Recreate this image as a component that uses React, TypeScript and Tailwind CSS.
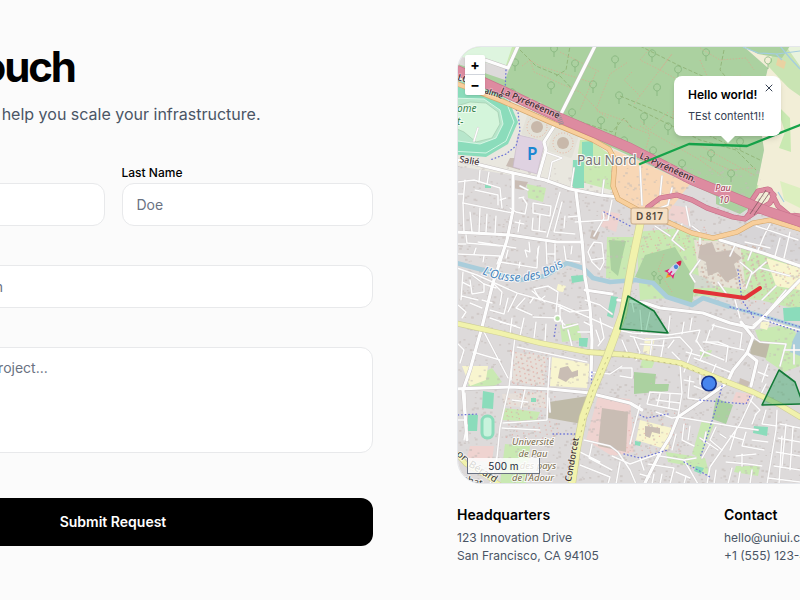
import type { ReactNode } from "react";
import { X } from "lucide-react";

// Map data ---------------------------------------------
const FOREST = [
	"M518 46H743L768 68 758 108 764 150 756 190 746 210 458 76V64L505 80Z",
	"M609 240 626 241 622 258 618 276 611 270Z",
	"M716 398 733 405 726 424 712 419Z",
	"M634 372 656 374 655 384 669 384 668 391 634 394Z",
	"M743 46H790L782 58 758 54Z",
	"M716 184 744 200 752 206 740 214 716 204Z",
];
const GRASS = [
	"M607 237H640L634 282 606 278Z",
	"M636 232 680 228 716 240 780 258 800 268V310L760 300 700 296 640 300Z",
	"M527 184 546 188 543 202 528 198Z",
	"M590 140 612 156 611 190 574 180 580 140Z",
	"M503 408 540 412 536 422 502 420Z",
	"M505 444 530 446 526 484 500 484Z",
	"M666 452 705 458 710 476 690 466 668 462Z",
	"M702 420 715 422 700 458 692 454Z",
	"M560 325 578 323 582 340 562 342Z",
	"M736 466 760 466 758 476 734 472Z",
	"M470 380 492 368 502 382 490 388 468 386Z",
	"M755 330 790 324 800 340V366L784 372 766 360Z",
	"M745 180 760 186 750 204 738 198Z",
	"M458 46H518L508 66 485 60 458 56Z",
	"M700 352 712 350 710 356 700 358Z",
	"M642 360 656 358 652 368 640 368Z",
];
const PITCH = [
	"M573 160 584 160 584 186 572 186Z",
	"M582 142 593 141 593 158 582 158Z",
	"M483 391 494 393 493 409 482 408Z",
	"M468 414 478 415 477 431 467 431Z",
	"M611 296 618 297 613 318 607 316Z",
	"M571 276 583 275 584 281 572 283Z",
	"M783 308 800 307 800 321 784 321Z",
	"M754 426 768 427 767 436 753 433Z",
	"M573 174 584 174 584 188 573 188Z",
	"M531 398 536 398 536 402 531 402Z",
	"M696 466 704 468 701 474 694 471Z",
	"M579 338 588 338 587 347 579 346Z",
	"M635 441 641 442 640 446 635 445Z",
	"M485 184 491 184 491 188 485 188Z",
];
const PINK = [
	"M598 396 630 399 634 452 612 456 586 440Z",
	"M672 205 690 208 688 226 668 218Z",
	"M470 446 494 446 492 462 466 460Z",
	"M602 210 620 214 616 232 600 226Z",
	"M736 392 752 394 748 404 732 402Z",
];
const SCHOOL = [
	"M552 357 590 364 587 388 550 386Z",
	"M640 420 672 428 668 450 636 440Z",
	"M462 366 488 366 486 380 470 386Z",
	"M558 284 566 286 563 292 556 291Z",
	"M766 258 800 268V290L776 286Z",
	"M761 322 770 322 767 330 760 328Z",
	"M645 338 655 338 651 355 643 352Z",
];
const BUILDINGS = [
	"M602 408 628 412 626 452 598 446Z",
	"M700 246 712 242 716 252 732 250 742 258 734 264 738 276 726 282 718 272 708 276 706 262 698 258Z",
	"M560 368 568 366 572 372 578 370 578 376 570 378 566 382 558 378Z",
	"M645 426 660 428 660 434 652 432 650 438 645 436Z",
	"M510 158 520 158 520 170 506 166Z",
	"M514 180 528 182 524 190 512 188Z",
	"M592 230 600 232 597 240 590 238Z",
	"M740 378 750 382 746 392 738 388Z",
];
const RINGS = [[537, 127], [563, 143]];

// trees standing in the wood
const TREES = [
	[575, 61], [551, 83], [593, 82], [615, 57], [619, 93], [572, 110], [601, 118], [515, 60], [554, 46],
	[624, 138], [652, 51], [678, 67], [706, 50], [657, 85], [644, 114], [768, 58], [653, 148], [711, 151],
	[740, 139], [731, 171], [682, 161], [668, 124], [512, 90],
];

const STREETS = [
	"M457 160 480 165 513 173 545 180 570 189 600 195 618 197",
	"M457 232 510 235 557 242 582 242",
	"M513 173V210L507 240 493 283 482 327 470 370 463 390 467 440",
	"M576 192 582 240 585 277 590 307 592 340 591 377",
	"M457 389 510 387 550 389 590 393",
	"M645 483 660 453 670 437 678 417 700 402 727 383 733 370 747 353 753 337 741 322",
	"M747 353 757 361 751 386",
	"M618 300 645 303 660 308 703 313 730 323 753 328 800 280",
	"M720 240 763 253 800 266 860 290",
	"M597 395 630 403 642 410",
	"M595 46 558 120 544 142 546 150 538 178",
	"M518 46 508 68 485 60",
	"M585 290 612 294",
];

const LANES = [
	"M463 203 513 213M457 254 500 256 497 264M457 268 477 275 517 293 560 305 590 318 617 330",
	"M500 262 537 268 538 248M560 192 547 237M575 222 608 220 612 200M594 236 604 218 603 212",
	"M465 180 463 203 464 232M457 182 474 180 500 188 502 208M475 190 498 195 498 205M470 212 472 232M496 216 495 234",
	"M466 235 467 243 500 246M478 242 516 248M484 256 483 262M500 200 506 198M523 198 527 204 525 214 516 212 510 208M519 198 524 197",
	"M533 203 551 206 550 216 533 213ZM533 218 532 230 546 232M540 215 539 231M562 202 554 232 575 234M565 216 564 228M568 217 578 216",
	"M529 242 530 252 525 250 527 257M539 246 537 258M546 242 547 264M555 244 555 262M564 246 566 260 580 262M572 246 571 254M548 254 555 254",
	"M590 248 594 242 602 243 604 262 600 270 592 262 588 252ZM591 260 604 258M472 275 484 284 484 292 472 294 470 280M493 283 502 292 500 305",
	"M525 298 516 308 532 315M508 298 504 314 490 310M517 294 508 312M534 297 530 303M482 300 492 303M545 296 540 300 534 289 548 286 558 292 556 312",
	"M558 306 570 312 590 310M532 291 545 302M533 317 558 318 565 325M560 305V320M470 303 482 308M458 305 466 312 462 318M585 300 600 305 612 314",
	"M483 330 508 378M457 343 464 350 460 363M473 352 500 360M515 337 509 387 500 427 497 457 490 484M517 347 550 354 587 362",
	"M550 357 548 389 547 420 503 423M513 352 511 380M590 372 610 374 622 366M610 356 600 374 593 382M596 330 600 342M592 332 578 332",
	"M562 320 563 328 578 324M465 393 466 420 458 420M502 428 540 430M549 398 550 412M525 390 521 408M467 425 464 440M512 400 528 402",
	"M580 465 610 477 608 484M592 444 589 458 612 470M612 456 630 464 660 453M580 452 600 462M584 440 610 446 618 452 630 470 636 484",
	"M618 330 632 333 668 335 700 330 696 342M680 365 682 393 678 417M634 338 640 352 636 360M650 312 646 330M640 310 642 334M632 303 634 312",
	"M630 336 646 340 680 337 692 350 684 372M668 348 674 340M696 340 704 352 700 360 730 372M703 342 718 342 728 346 726 362M712 325 742 333 740 348",
	"M700 350 724 360M694 358 704 362M710 330 706 342 744 350M714 324 712 330M620 368 632 368 632 378 620 376M700 375 700 384 712 390",
	"M650 392 681 394M656 400 680 403M650 392 647 404 678 410M660 394 657 406M670 394 669 408M640 405 636 420 630 444M656 412 672 418 678 417",
	"M678 417 737 427 730 450M755 392 740 424 710 467 707 484M777 410 776 430 767 484M750 400 760 410 755 415M737 427 758 430",
	"M716 427 710 440 722 450M700 438 718 450M710 444 702 458M726 462 748 464 762 466M742 454 742 466M736 456 756 454M732 468 728 484",
	"M780 424 800 428M778 438 800 442M776 452 800 456M774 466 800 470M786 424 782 466M793 427 790 470M782 436 779 484M768 478 800 482",
	"M766 410 762 424 777 426M756 414 752 424M648 464 674 468 670 484M660 456 684 460 698 484M684 460 696 458M676 472 690 478M640 474 650 477",
	"M753 337 760 342 786 344 780 366M753 325 764 316 786 290M760 318 784 326 800 330M735 300 740 318M784 350 800 350M794 345 794 364",
	"M735 245 730 256M752 250 748 260M764 236 758 250M780 238 775 256M756 226 798 240M770 224 764 236M790 232 784 258M745 242 770 248",
	"M692 226 700 232 700 244M682 224 672 240 684 250M686 206 690 226M655 226 670 236M700 260 690 274 695 282M740 262 752 272 746 288M718 282 728 296",
	"M766 262 752 274M760 268 790 276M776 286 762 300M672 188 668 205 655 210M640 166 642 205M662 176 660 196M574 168 571 188M604 180 602 196",
	"M478 128 474 141M545 152 562 158M528 190 520 186M548 182 552 162 562 158",
	"M480 208 479 232M487 214 486 232M480 170 479 182M489 172 487 184M458 194 463 194M520 220 518 232M515 222 524 224M458 244 466 244",
	"M476 248 474 254M508 250 506 258M520 262 519 268M462 282 470 286M463 272 461 300M484 284 496 288M462 296 478 300M500 322 516 326",
	"M490 318 520 328M512 318 510 334M524 318 520 336 540 342M536 322 534 338M546 324 545 342M568 330 572 346M600 318 604 338 598 346M584 322 592 326",
	"M640 344 664 346M652 340 650 358M664 340 660 362M672 352 680 360M622 340 628 354M612 344 610 350M684 322 682 334M670 316 668 334M692 318 690 330",
	"M686 352 700 356M690 376 688 398 702 400M694 386 704 390M684 380 694 382M716 364 712 374M758 372 768 376M768 364 762 382M760 396 766 384",
	"M746 432 742 446 764 450M752 440 768 442M730 436 744 440M720 434 726 438M706 432 704 442M684 424 682 440 694 446M690 426 688 440M676 434 672 450",
	"M620 462 616 484M640 458 644 470M654 474 652 484M662 474 660 484M686 476 684 484M716 470 714 484M740 472 738 484M752 470 750 484",
];

const PATHS = [
	"M520 50 536 66 560 76 575 92M620 96 640 104 660 112 706 134 760 160M640 46 680 66 720 84 758 104M556 76 566 70 570 46",
	"M575 120 612 132 624 118 632 128M628 104 664 122 700 140 736 150 756 170M724 50 720 70 730 82M615 136 618 122",
];
const DIRT = [
	"M530 60 534 72 580 92 600 112 628 122M522 66 530 60 540 66 590 82M608 118 596 110 610 74 628 62",
	"M634 104 672 54 660 70 640 60 650 48M660 70 700 92 690 120M668 112 650 130 640 120M676 96 672 120M632 72 624 80 640 96M700 60 708 78 742 76",
	"M640 126 700 160 722 176M700 48 720 60 746 58 754 70M628 126 650 134 646 148M690 140 756 176M560 52 600 72",
	"M664 254 658 270 672 292M596 72 580 110M700 156 730 170 756 168",
];

const FOOTWAYS = "M506 70 505 92 510 102 518 112 520 130 516 146 506 154 490 160M604 212 630 226M722 386 718 402 706 440 700 458M700 400 746 404 752 392M640 415 646 418 668 414M624 454 640 458 668 450M684 462 710 477M738 270 742 300 754 318M730 307 753 313 800 327M770 322 800 332M556 325 554 338M553 434 575 434M458 415 478 414M592 372 591 394";

const MOTORWAY = "M450 67 505 92 560 118 630 148 692 180 767 211 800 222 980 285";
const RAMPS = "M642 218 648 207 660 198 677 195 692 200 707 208 733 217 745 219 754 213 770 203 774 195 768 189 758 191 752 200 750 213 745 219M770 190 778 206 800 224M757 211 800 216";
const PRIMARY = "M450 81 502 101 550 122 593 140 609 149 615 160 613 186 618 199 640 211 670 223 692 233 713 238 737 232 753 223 770 220 800 229 980 280";
const YELLOW_NS = "M641 220 632 263 623 313 617 330 607 357 593 390 583 417 577 447 571 490";
const YELLOW_EW = "M450 322 500 333 540 343 587 352 630 355 680 363 727 382 753 392 780 405 800 417 980 500";
const RIVER = "M457 263 483 270 520 280 545 276 567 263 583 268 593 278 610 282 635 280 653 283 667 297 692 305 703 298 730 307";

// deterministic speckles standing for single houses
const houses = Array.from({ length: 2200 }, (_, i) => ({
	x: 458 + ((i * 73.13) % 345),
	y: 166 + ((i * 41.77 + i * i * 0.013) % 318),
	size: 1 + (i % 3) * 0.5,
}));
const dots = Array.from({ length: 240 }, (_, i) => ({
	x: (i * 17.31) % 66,
	y: (i * 29.87) % 44,
}));

const Cased = ({ d, width, fill, edge }: { d: string; width: number; fill: string; edge: string }) => (
	<g fill="none" strokeLinejoin="round" strokeLinecap="round">
		<path d={d} stroke={edge} strokeWidth={width + 1.2} />
		<path d={d} stroke={fill} strokeWidth={width} />
	</g>
);

const Shapes = ({ list, fill }: { list: string[]; fill: string }) => (
	<g fill={fill}>{list.map((d) => <path key={d} d={d} />)}</g>
);

const CityMap = () => (
	<svg
		className="block h-full w-full"
		viewBox="458 47 518 436"
		preserveAspectRatio="xMinYMin slice"
		role="img"
		aria-label="Street map"
		fontFamily="'Noto Sans', sans-serif"
	>
		<rect x="458" y="46" width="519" height="438" fill="#dddada" />

		{/* Land use */}
		<path d="M458 76 640 150 616 200 538 180 458 166Z" fill="#e9e7df" />
		<path d="M614 150 690 184 668 212 632 208 612 196Z" fill="#f8d8b7" />
		<path d="M743 46H977V300L800 222 752 206 764 150 758 108 768 68Z" fill="#f2eed7" />
		<path d="M776 46H800V100L781 80 768 66Z" fill="#c9e4b3" />
		<path d="M786 46H977V72L800 66Z" fill="#e9f3dd" />
		<Shapes list={GRASS} fill="#c9e9b2" />
		<Shapes list={FOREST} fill="#abd1a0" />
		<path d="M458 47H512L505 68 482 62 458 56Z" fill="#def5df" />
		<Shapes list={PINK} fill="#efd3d0" />
		<Shapes list={SCHOOL} fill="#f8f5cf" />
		<path d="M502 394 545 392 546 408 504 406ZM515 352 546 356 544 386 512 382Z" fill="#e6dfd9" />
		<path d="M694 240 740 242 746 290 700 284Z" fill="#e6e1d5" />
		<path d="M754 224 800 238V262L722 240Z" fill="#d8d6d8" />
		<path d="M688 272 706 278 716 288 690 288Z" fill="#d3d9ce" />

		<g fill="#c4bcb8" opacity="0.55">
			{houses.map((h, i) => <rect key={i} x={h.x} y={h.y} width={h.size + 0.6} height={h.size} />)}
		</g>
		<g fill="#d2bcb0" transform="translate(700 244)">
			{dots.slice(0, 90).map((p, i) => <rect key={i} x={p.x} y={p.y} width="2" height="2" />)}
		</g>
		<g fill="#e3a9a1" opacity="0.7">
			{dots.slice(0, 90).map((p, i) => <rect key={i} x={510 + p.x * 0.6} y={350 + p.y} width="1.4" height="1.4" />)}
			{dots.slice(90, 170).map((p, i) => <rect key={i} x={505 + p.x * 0.8} y={396 + p.y} width="1.3" height="1.3" />)}
			{dots.slice(170, 230).map((p, i) => <rect key={i} x={640 + p.x} y={226 + p.y * 0.6} width="1.3" height="1.3" />)}
			{dots.slice(100, 170).map((p, i) => <rect key={i} x={740 + p.x} y={262 + p.y} width="1.3" height="1.3" />)}
			{dots.slice(40, 100).map((p, i) => <rect key={i} x={620 + p.x} y={410 + p.y} width="1.2" height="1.2" />)}
		</g>
		<Shapes list={BUILDINGS} fill="#c9bdb4" />
		<path d="M549 402 588 396 582 424 548 418ZM752 340 770 342 766 358 750 354Z" fill="#bfbaa8" />
		<path d="M645 255 675 247 687 267 695 280 692 305 667 295 653 283 635 277Z" fill="#abd1a0" />
		<Shapes list={PITCH} fill="#8bdcbb" />
		<rect x="482" y="416" width="11" height="22" rx="5" fill="#c8f3dd" stroke="#8bdcbb" strokeWidth="3" />
		<path d="M768 68 777 80 800 96V215L757 190 770 150 764 116Z" fill="#f2eed7" />
		<path d="M776 104 790 118 791 152 779 148 785 132Z" fill="#c9e9b2" />
		<path d="M778 57 786 62 784 69 776 65Z" fill="#ead2a2" />
		<path d="M780 181 800 188V208L784 200Z" fill="#dcefbf" />

		{/* Racecourse */}
		<path d="M450 80 470 82 489 88 509 101 518 122 508 144 486 157 450 154Z" fill="#8bdcbb" />
		<path d="M450 98 484 99 500 110 503 124 496 138 480 144 450 140Z" fill="#b7e6cb" />
		<path d="M450 108 470 102 486 103 498 112 500 124 492 138 476 142 464 132 450 126Z" fill="#d4f5db" stroke="#a6ceb3" strokeWidth="0.8" />
		<path d="M450 98 484 99 500 110 503 124 496 138 480 144 450 140M450 151 486 153 506 141 514 122 507 104 487 91" fill="none" stroke="#e3fbed" strokeWidth="0.8" />
		<path d="M518 135 545 141 537 174 513 167Z" fill="#dfd2e1" stroke="#c5b6c8" strokeWidth="0.6" />
		{RINGS.map(([x, y]) => (
			<g key={x}>
				<rect x={x - 13} y={y - 12} width="26" height="24" rx="2" fill="#e3e1d8" transform={`rotate(18 ${x} ${y})`} />
				<circle cx={x} cy={y} r="6" fill="#c8b9aa" />
				<circle cx={x} cy={y} r="10" fill="none" stroke="#e8b09b" strokeWidth="1" strokeDasharray="1 2" />
			</g>
		))}

		{/* Water */}
		<path d={RIVER} fill="none" stroke="#a9cddb" strokeWidth="4.6" strokeLinejoin="round" />
		<path d="M730 307 753 313 800 327" fill="none" stroke="#a9cddb" strokeWidth="3" />
		<path d="M743 47 758 53 777 54 800 51 840 58M780 46 790 58 800 69M776 54 782 60M778 192 784 202" fill="none" stroke="#a4cde0" strokeWidth="1.2" />
		<path d="M793 340 800 326V356L790 352Z" fill="#a9cddb" />

		{/* Woodland */}
		<g fill="none" stroke="#80b079" strokeWidth="1" opacity="0.75">
			{TREES.map(([x, y]) => (
				<path key={`${x}-${y}`} d={`M${x} ${y + 11}V${y + 6}a3.4 3.6 0 1 1 .1 0`} />
			))}
			<path d="M654 280v-4a2.2 2.2 0 1 1 .1 0M660 284v-4a2.2 2.2 0 1 1 .1 0" />
		</g>
		<g fill="none" strokeWidth="0.9">
			{PATHS.map((d) => <path key={d} d={d} stroke="#8aab6c" strokeDasharray="4 2" opacity="0.8" />)}
			{DIRT.map((d) => <path key={d} d={d} stroke="#d9a990" strokeDasharray="1.5 1.5" opacity="0.8" />)}
		</g>

		{/* Streets */}
		<g fill="none" strokeLinejoin="round" strokeLinecap="round">
			{LANES.map((d) => <path key={d} d={d} stroke="#cfcaca" strokeWidth="2.2" />)}
			{STREETS.map((d) => <path key={d} d={d} stroke="#c4bfbf" strokeWidth="4" />)}
			{LANES.map((d) => <path key={d} d={d} stroke="#fdfdfd" strokeWidth="1.5" />)}
			{STREETS.map((d) => <path key={d} d={d} stroke="#fdfdfd" strokeWidth="3.2" />)}
			<path d={FOOTWAYS} stroke="#6e75d6" strokeWidth="1.3" strokeDasharray="0.6 3" />
		</g>
		<Cased d={YELLOW_EW} width={4.6} fill="#f1f2ac" edge="#cfcf98" />
		<Cased d={YELLOW_NS} width={7} fill="#f1f2ac" edge="#cfcf98" />
		<Cased d="M450 446 466 464 490 478 510 492" width={4} fill="#f1f2ac" edge="#cfcf98" />
		<path d="M622 356 680 365 727 384M608 357 593 390 577 447" fill="none" stroke="#c2c080" strokeWidth="1" strokeDasharray="2 4" />
		<Cased d={PRIMARY} width={4} fill="#f8cf9c" edge="#d4a76c" />
		<Cased d={RAMPS} width={4} fill="#dd8ba0" edge="#c56c86" />
		<Cased d={MOTORWAY} width={9} fill="#dd8ba0" edge="#c8748d" />
		<path d="M766 190 750 214M770 192 754 215" stroke="#7c5860" strokeWidth="0.8" />
		<path d="M557 112 562 125" stroke="#9a9298" strokeWidth="5" strokeDasharray="1 1" />
		<circle cx="557.5" cy="318.5" r="3" fill="#b7dfa6" stroke="#fff" strokeWidth="1.6" />

		{/* Labels */}
		<g fill="none" stroke="#fff" strokeOpacity="0.6" strokeWidth="2" paintOrder="stroke">
			<g fontSize="9" fontWeight="500" fill="#3b2b2f" strokeOpacity="0.25">
				<text transform="translate(500 93) rotate(24)">La Pyrénéenne</text>
				<text transform="translate(639 158) rotate(24)">La Pyrénéenn.</text>
				<text transform="translate(484 93) rotate(18)" fontSize="8">alme</text>
				<text transform="translate(457 80) rotate(17)">LO</text>
				<text transform="translate(459 162) rotate(10)">Salié</text>
				<text transform="translate(571 482) rotate(-80)">Condorcet</text>
			</g>
			<g fontSize="10" fill="#3a3a30">
				<text transform="translate(456 455) rotate(40)">or</text>
				<text transform="translate(468 466) rotate(32)">Bérard</text>
				<text transform="translate(462 482) rotate(14)">chat</text>
			</g>
			<g fontSize="10" fontStyle="italic" fill="#35834b">
				<text x="457" y="112">ome</text>
				<text x="457" y="125">t-</text>
			</g>
			<text x="577" y="165" fontSize="13.5" fill="#777" strokeOpacity="0.9">Pau Nord</text>
			<g fontSize="9" fontStyle="italic" fill="#a3364f" textAnchor="middle" strokeOpacity="0.8">
				<text x="723" y="191">Pau</text>
				<text x="724" y="203">10</text>
			</g>
			<g fontSize="9.5" fontStyle="italic" fill="#7a6c4c" textAnchor="middle" strokeOpacity="0.8">
				<text x="533" y="445">Université</text>
				<text x="533" y="457">de Pau</text>
				<text x="538" y="469">des pays</text>
				<text x="533" y="481">de l'Adour</text>
			</g>
			<path id="river-label" d="M482 274 Q530 294 572 260" stroke="none" />
			<text fontSize="12" fontStyle="italic" fill="#4a86bd" strokeOpacity="0.8">
				<textPath href="#river-label">L'Ousse des Bois</textPath>
			</text>
		</g>
		<text x="527" y="160" fontSize="17" fontWeight="600" fill="#1b87d2">P</text>
		<rect x="631" y="208" width="37" height="16" rx="2" fill="#f5dfc3" stroke="#c9a986" />
		<text x="649.5" y="220" fontSize="10" fontWeight="600" textAnchor="middle" fill="#54483c">D 817</text>

		{/* Overlays */}
		<g fill="none" strokeLinecap="round" strokeLinejoin="round">
			<path d="M640 164 689 144 747 146 800 125 880 96" stroke="#16a34a" strokeWidth="2.4" />
			<path d="M695 291 745 298 760 288" stroke="#e23338" strokeWidth="4" />
			<path d="M628 296 654 311 668 333 620 329Z" fill="#22a05a" fillOpacity="0.4" stroke="#137a37" strokeWidth="1.6" />
			<path d="M779 370 795 382 803 404 762 405Z" fill="#22a05a" fillOpacity="0.4" stroke="#137a37" strokeWidth="1.6" />
		</g>
		<circle cx="709" cy="383.5" r="7.2" fill="#4785ee" stroke="#17368f" strokeWidth="1.6" />
		<g transform="translate(674 269) rotate(42)">
			<path d="M-2 7 0 12 3 7Z" fill="#f59a2b" />
			<path d="M-3 2-6 8-2 7 3 7 6 8 3 2Z" fill="#e31c79" />
			<path d="M-3 6C-4-2-2-7 0-10 2-7 4-2 3 6Z" fill="#dcd3e8" />
			<path d="M-2.6-6C-2-9-1-10 0-11 1-10 2-9 2.6-6Z" fill="#d81f4d" />
			<circle cy="-3" r="2.2" fill="#4f86d8" />
			<path d="M0 3V8" stroke="#e31c79" strokeWidth="1.6" />
		</g>
	</svg>
);

// Form ---------------------------------------------
const fieldClass =
	"block w-full rounded-xl border border-[#e8e9eb] bg-white px-3.5 text-sm text-black placeholder-gray-500 focus:outline-none focus:ring-2 focus:ring-black";

const Field = ({ id, label, children }: { id: string; label: string; children: ReactNode }) => (
	<div>
		<label htmlFor={id} className="block pb-0.5 text-xs leading-4 font-medium text-black">{label}</label>
		{children}
	</div>
);

const ContactForm = () => (
	<form className="mt-[39px] flex flex-col gap-[21px]" onSubmit={(e) => e.preventDefault()}>
		<div className="grid grid-cols-2 gap-[17px]">
			<Field id="first-name" label="First Name">
				<input id="first-name" type="text" placeholder="John" className={`${fieldClass} h-[43px]`} />
			</Field>
			<Field id="last-name" label="Last Name">
				<input id="last-name" type="text" placeholder="Doe" className={`${fieldClass} h-[43px]`} />
			</Field>
		</div>
		<Field id="email" label="Email">
			<input id="email" type="email" placeholder="john@company.com" className={`${fieldClass} h-[43px]`} />
		</Field>
		<Field id="message" label="Message">
			<textarea
				id="message"
				placeholder="Tell us about your project..."
				className={`${fieldClass} h-[106px] resize-none py-2.5`}
			/>
		</Field>
		<button type="submit" className="mt-6 h-12 w-full rounded-xl bg-black text-sm font-semibold text-white hover:bg-gray-800">
			Submit Request
		</button>
	</form>
);

const MapCard = () => (
	<div className="relative h-[438px] overflow-hidden rounded-3xl border border-gray-200">
		<CityMap />
		<div className="absolute top-2 left-[7px] flex w-5 flex-col divide-y divide-gray-300 rounded-xs bg-white text-sm font-bold text-black shadow">
			<button type="button" aria-label="Zoom in" className="h-5 leading-5">+</button>
			<button type="button" aria-label="Zoom out" className="h-5 leading-5">−</button>
		</div>
		<div className="absolute top-[29px] left-[216px] h-[60px] w-[107px] rounded-lg bg-white px-3.5 py-2.5 shadow-md">
			<p className="text-xs leading-[18px] font-semibold whitespace-nowrap text-black">Hello world!</p>
			<p className="mt-1 text-[11px] leading-4 whitespace-nowrap text-gray-700">TEst content1!!</p>
			<button type="button" aria-label="Close popup" className="absolute top-1.5 right-1.5 text-gray-700">
				<X size={12} strokeWidth={2} />
			</button>
			<svg className="absolute top-full left-1/2 -translate-x-1/2" width="14" height="7" viewBox="0 0 14 7">
				<path d="M0 0H14L7 7Z" fill="#fff" />
			</svg>
		</div>
		<div className="absolute bottom-[9px] left-[9px] h-4 w-[73px] border border-t-0 border-gray-500 bg-white/80 text-center text-[10px] leading-4 text-gray-800">
			500 m
		</div>
	</div>
);

const Info = ({ title, lines }: { title: string; lines: string[] }) => (
	<div>
		<h3 className="text-sm leading-5 font-semibold text-black">{title}</h3>
		<p className="mt-1 text-xs leading-[18px] text-gray-600">
			{lines.map((line) => <span key={line} className="block">{line}</span>)}
		</p>
	</div>
);

// View ---------------------------------------------
const App = () => (
	<main className="min-h-screen overflow-hidden bg-[#fbfbfb] font-[Inter,sans-serif]">
		<section className="-mr-[177px] -ml-[147px] grid grid-cols-2 gap-[84px] pt-[46px] pb-10">
			<div>
				<h1 className="text-[42px] leading-[42px] font-bold tracking-tighter text-black">Get in touch</h1>
				<p className="mt-3.5 text-base leading-6 text-gray-600">
					Our team is here to help you scale your infrastructure.
				</p>
				<ContactForm />
			</div>
			<div>
				<MapCard />
				<div className="mt-[21px] grid grid-cols-2 gap-3.5">
					<Info title="Headquarters" lines={["123 Innovation Drive", "San Francisco, CA 94105"]} />
					<Info title="Contact" lines={["hello@uniui.com", "+1 (555) 123-4567"]} />
				</div>
			</div>
		</section>
	</main>
);

export default App;
